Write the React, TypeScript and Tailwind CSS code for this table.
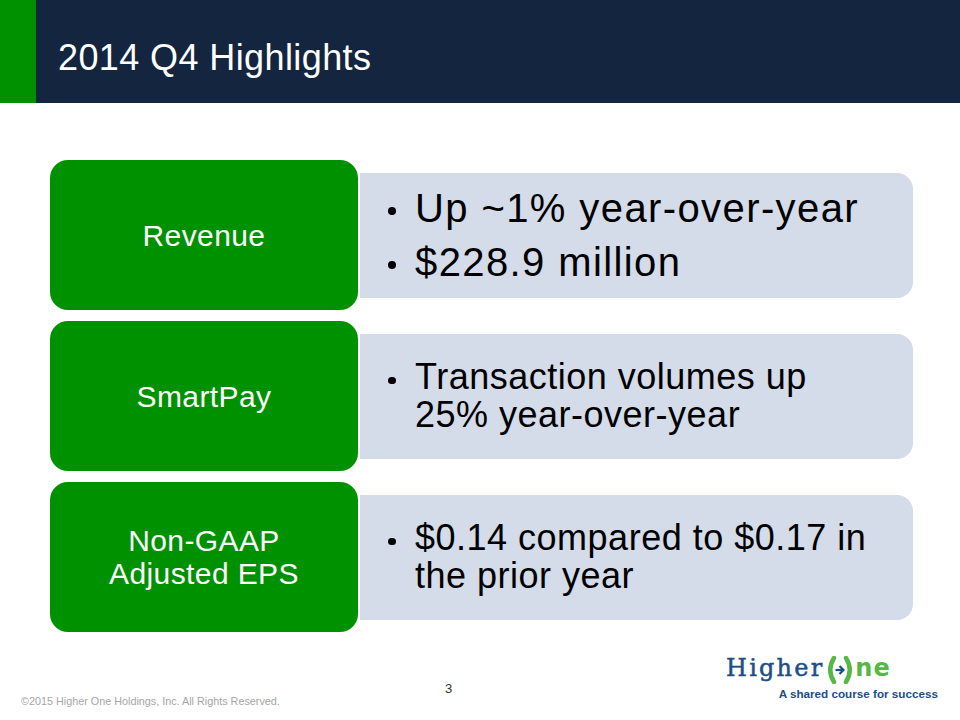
import React from "react";

interface Highlight {
  label: React.ReactNode;
  bullets: string[];
  big?: boolean;
}

const highlights: Highlight[] = [
  { label: "Revenue", bullets: ["Up ~1% year-over-year", "$228.9 million"], big: true },
  { label: "SmartPay", bullets: ["Transaction volumes up 25% year-over-year"] },
  {
    label: (
      <>
        Non-GAAP
        <br />
        Adjusted EPS
      </>
    ),
    bullets: ["$0.14 compared to $0.17 in the prior year"],
  },
];

function HighlightRow({ item }: { item: Highlight }) {
  return (
    <div className="flex items-center h-[154px]">
      <div className="w-[312px] h-[154px] shrink-0 rounded-[20px] border-2 border-white bg-[#009100] flex items-center justify-center text-center text-white text-[30px] leading-[33px] tracking-[0.4px]">
        {item.label}
      </div>
      <div className="w-[553px] h-[125px] bg-[#d4dbe9] rounded-r-[16px] pl-[28px] flex flex-col justify-center text-black">
        {item.bullets.map((b) => (
          <div
            key={b}
            className={
              item.big
                ? "flex items-start text-[40px] leading-[54px] tracking-[1.4px]"
                : "flex items-start text-[36px] leading-[38px] tracking-[0.5px]"
            }
          >
            <span className="w-[27px] shrink-0">
              <span
                className={
                  item.big
                    ? "block w-[8px] h-[8px] mt-[26px] rounded-full bg-black"
                    : "block w-[7.5px] h-[7.5px] mt-[18.5px] rounded-full bg-black"
                }
              />
            </span>
            <span className="w-[460px]">{b}</span>
          </div>
        ))}
      </div>
    </div>
  );
}

function HigherOneLogo() {
  return (
    <div className="flex flex-col w-[212px]">
      <div className="flex items-end self-start h-[28px]">
        <span className="font-['DejaVu_Serif',serif] text-[24px] leading-none tracking-[2.2px] text-[#1d4e89] [-webkit-text-stroke:0.5px_#1d4e89]">
          Higher
        </span>
        <svg width="30" height="28" viewBox="0 0 30 28" className="ml-[1px] mb-[-4px]">
          <path d="M9 2 Q1.5 14 9 26" fill="none" stroke="#56b947" strokeWidth="4.5" strokeLinecap="round" />
          <path d="M21 2 Q28.5 14 21 26" fill="none" stroke="#56b947" strokeWidth="4.5" strokeLinecap="round" />
          <path d="M10.5 14 H18" fill="none" stroke="#1d4e89" strokeWidth="2.2" />
          <path d="M14.5 10 L18.5 14 L14.5 18" fill="none" stroke="#1d4e89" strokeWidth="2.2" />
        </svg>
        <span className="font-['DejaVu_Sans',sans-serif] font-bold text-[24px] leading-none tracking-[1px] text-[#56b947]">
          ne
        </span>
      </div>
      <span className="self-end mt-[8px] font-['Liberation_Sans',Arial,sans-serif] font-bold text-[11.7px] leading-[12px] text-[#1d4e89]">
        A shared course for success
      </span>
    </div>
  );
}

export default function App() {
  return (
    <div className="w-[960px] h-[720px] bg-white flex flex-col overflow-hidden font-['Liberation_Sans',Arial,sans-serif]">
      <header className="flex h-[103px] shrink-0">
        <div className="w-[36px] bg-[#009100]" />
        <div className="flex-1 bg-[#13253f] pl-[22px] pt-[40px]">
          <h1 className="text-white text-[36px] leading-none tracking-[0.4px]">2014 Q4 Highlights</h1>
        </div>
      </header>

      <main className="flex flex-col gap-[7px] pl-[48px] mt-[55px]">
        {highlights.map((h, i) => (
          <HighlightRow key={i} item={h} />
        ))}
      </main>

      <footer className="flex-1 flex items-end pl-[21px] pr-[22px]">
        <span className="w-[424px] mb-[13px] text-[10.8px] leading-[12px] text-[#a6a6a6]">
          ©2015 Higher One Holdings, Inc. All Rights Reserved.
        </span>
        <span className="mb-[25px] text-[13px] leading-[13px] text-[#333333]">3</span>
        <div className="ml-auto mb-[20px]">
          <HigherOneLogo />
        </div>
      </footer>
    </div>
  );
}
